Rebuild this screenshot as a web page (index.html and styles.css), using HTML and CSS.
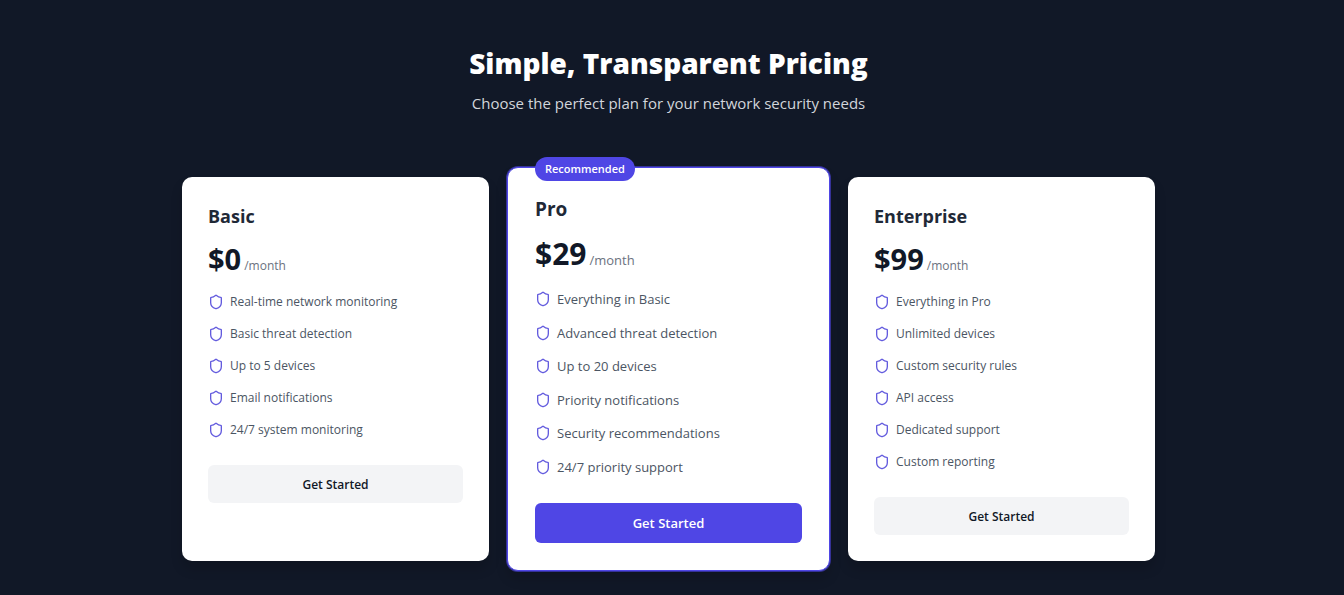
FILE: index.html
```html
<!DOCTYPE html>
<html lang="en">
<head>
<meta charset="utf-8">
<meta name="viewport" content="width=device-width, initial-scale=1">
<title>Pricing</title>
<link rel="stylesheet" href="styles.css">
</head>
<body>
<svg width="0" height="0" class="sprite" aria-hidden="true">
  <symbol id="shield" viewBox="0 0 24 24">
    <path d="M20 13c0 5-3.500 7.500-7.660 8.950a1 1 0 0 1-.670-.010C7.500 20.500 4 18 4 13V6a1 1 0 0 1 1-1c2 0 4.500-1.200 6.240-2.720a1.170 1.170 0 0 1 1.520 0C14.510 3.810 17 5 19 5a1 1 0 0 1 1 1z"/>
  </symbol>
</svg>
<main class="pricing">
  <header class="intro">
    <h1 class="intro-title">Simple, Transparent Pricing</h1>
    <p class="intro-text">Choose the perfect plan for your network security needs</p>
  </header>
  <div class="plans">
    <section class="plan">
      <h2 class="plan-name">Basic</h2>
      <p class="plan-price"><span class="amount">$0</span><span class="period">/month</span></p>
      <ul class="features">
        <li class="feature"><svg class="icon"><use href="#shield"/></svg>Real-time network monitoring</li>
        <li class="feature"><svg class="icon"><use href="#shield"/></svg>Basic threat detection</li>
        <li class="feature"><svg class="icon"><use href="#shield"/></svg>Up to 5 devices</li>
        <li class="feature"><svg class="icon"><use href="#shield"/></svg>Email notifications</li>
        <li class="feature"><svg class="icon"><use href="#shield"/></svg>24/7 system monitoring</li>
      </ul>
      <button class="cta" type="button">Get Started</button>
    </section>
    <section class="plan plan-featured">
      <span class="badge">Recommended</span>
      <h2 class="plan-name">Pro</h2>
      <p class="plan-price"><span class="amount">$29</span><span class="period">/month</span></p>
      <ul class="features">
        <li class="feature"><svg class="icon"><use href="#shield"/></svg>Everything in Basic</li>
        <li class="feature"><svg class="icon"><use href="#shield"/></svg>Advanced threat detection</li>
        <li class="feature"><svg class="icon"><use href="#shield"/></svg>Up to 20 devices</li>
        <li class="feature"><svg class="icon"><use href="#shield"/></svg>Priority notifications</li>
        <li class="feature"><svg class="icon"><use href="#shield"/></svg>Security recommendations</li>
        <li class="feature"><svg class="icon"><use href="#shield"/></svg>24/7 priority support</li>
      </ul>
      <button class="cta" type="button">Get Started</button>
    </section>
    <section class="plan">
      <h2 class="plan-name">Enterprise</h2>
      <p class="plan-price"><span class="amount">$99</span><span class="period">/month</span></p>
      <ul class="features">
        <li class="feature"><svg class="icon"><use href="#shield"/></svg>Everything in Pro</li>
        <li class="feature"><svg class="icon"><use href="#shield"/></svg>Unlimited devices</li>
        <li class="feature"><svg class="icon"><use href="#shield"/></svg>Custom security rules</li>
        <li class="feature"><svg class="icon"><use href="#shield"/></svg>API access</li>
        <li class="feature"><svg class="icon"><use href="#shield"/></svg>Dedicated support</li>
        <li class="feature"><svg class="icon"><use href="#shield"/></svg>Custom reporting</li>
      </ul>
      <button class="cta" type="button">Get Started</button>
    </section>
  </div>
</main>
</body>
</html>
```
FILE: styles.css
```css
* {
  box-sizing: border-box;
  margin: 0;
  padding: 0;
}

body {
  background: #111827;
  color: #111827;
  font-family: "Segoe UI", "Open Sans", "Noto Sans", sans-serif;
  font-size: 12px;
  line-height: 19px;
}

.sprite {
  position: absolute;
}

.pricing {
  max-width: 1024px;
  margin: 0 auto;
  padding: 44px 29px 34px 22px;
}

.intro {
  text-align: center;
  margin-bottom: 62px;
}

.intro-title {
  color: #fff;
  font-size: 28px;
  font-weight: 800;
  line-height: 38px;
}

.intro-text {
  margin-top: 9px;
  color: #d1d5db;
  font-size: 15px;
  line-height: 24px;
}

.plans {
  display: grid;
  grid-template-columns: repeat(3, 1fr);
  gap: 26px;
}

.plan {
  display: flex;
  flex-direction: column;
  padding: 26px;
  background: #fff;
  border-radius: 10px;
  box-shadow: 0 8px 12px rgba(0, 0, 0, 0.15);
}

.plan-name {
  color: #1f2937;
  font-size: 18px;
  font-weight: 700;
  line-height: 26px;
}

.plan-price {
  display: flex;
  align-items: baseline;
  gap: 3px;
  margin: 10px 0 13px;
  line-height: 40px;
}

.amount {
  font-size: 29px;
  font-weight: 700;
}

.period {
  color: #6b7280;
  line-height: 19px;
}

.features {
  display: flex;
  flex-direction: column;
  gap: 13px;
  list-style: none;
}

.feature {
  display: flex;
  align-items: center;
  gap: 6px;
  color: #4b5563;
}

.icon {
  flex: none;
  width: 16px;
  height: 16px;
  fill: none;
  stroke: #635bde;
  stroke-width: 2;
  stroke-linejoin: round;
}

.cta {
  margin-top: 26px;
  height: 38px;
  border: 0;
  border-radius: 6px;
  background: #f3f4f6;
  color: #111827;
  font: inherit;
  font-weight: 600;
  cursor: pointer;
}

.plan-featured {
  position: relative;
  margin: -10px -8px;
  padding: 27px;
  border: 1px solid #4f46e5;
  border-radius: 11px;
  box-shadow: 0 0 0 1px rgba(79, 70, 229, 0.6), 0 8px 12px rgba(0, 0, 0, 0.15);
  font-size: 13px;
  line-height: 20px;
}

.plan-featured .plan-name {
  font-size: 19px;
  line-height: 28px;
}

.plan-featured .plan-price {
  margin-bottom: 14px;
  line-height: 42px;
}

.plan-featured .amount {
  font-size: 30px;
}

.plan-featured .features {
  flex: 1;
  gap: 0;
  justify-content: space-between;
}

.plan-featured .cta {
  height: 40px;
  background: #4f46e5;
  color: #fff;
}

.badge {
  position: absolute;
  top: -11px;
  left: 27px;
  padding: 2px 10px;
  border-radius: 12px;
  background: #4f46e5;
  color: #fff;
  font-size: 11px;
  font-weight: 600;
}
```
